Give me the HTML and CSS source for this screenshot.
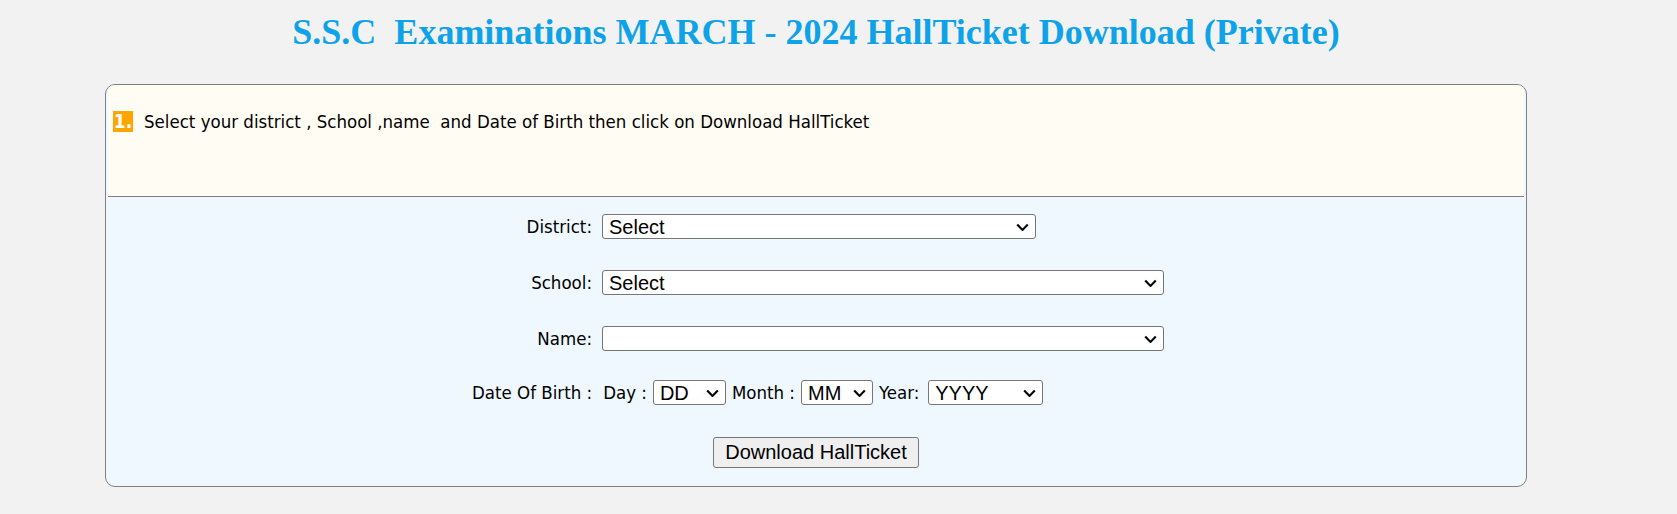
FILE: index.html
```html
<!DOCTYPE html>
<html>
<head>
<meta charset="utf-8">
<title>S.S.C Examinations MARCH - 2024 HallTicket Download (Private)</title>
<link rel="stylesheet" href="styles.css">
</head>
<body>
<div class="page">
  <h1 class="title">S.S.C&nbsp; Examinations MARCH - 2024 HallTicket Download (Private)</h1>
  <div class="panel">
    <div class="instructions">
      <span class="badge">1.</span>
      <span class="instr-text">Select your district , School ,name&nbsp; and Date of Birth then click on Download HallTicket</span>
    </div>
    <div class="form">
      <div class="field-row">
        <label class="label">District:</label>
        <span class="select-wrap w-district">
          <select class="select"><option>Select</option></select>
          <svg class="chev" viewBox="0 0 12 8"><path d="M1 1.5 L6 6.5 L11 1.5" fill="none" stroke="#000" stroke-width="2"/></svg>
        </span>
      </div>
      <div class="field-row">
        <label class="label">School:</label>
        <span class="select-wrap w-wide">
          <select class="select"><option>Select</option></select>
          <svg class="chev" viewBox="0 0 12 8"><path d="M1 1.5 L6 6.5 L11 1.5" fill="none" stroke="#000" stroke-width="2"/></svg>
        </span>
      </div>
      <div class="field-row">
        <label class="label">Name:</label>
        <span class="select-wrap w-wide">
          <select class="select"><option></option></select>
          <svg class="chev" viewBox="0 0 12 8"><path d="M1 1.5 L6 6.5 L11 1.5" fill="none" stroke="#000" stroke-width="2"/></svg>
        </span>
      </div>
      <div class="dob-row">
        <span class="label dob-label">Date Of Birth :</span>
        <span class="label">Day :</span>
        <span class="select-wrap w-dd">
          <select class="select"><option>DD</option></select>
          <svg class="chev" viewBox="0 0 12 8"><path d="M1 1.5 L6 6.5 L11 1.5" fill="none" stroke="#000" stroke-width="2"/></svg>
        </span>
        <span class="label">Month :</span>
        <span class="select-wrap w-mm">
          <select class="select"><option>MM</option></select>
          <svg class="chev" viewBox="0 0 12 8"><path d="M1 1.5 L6 6.5 L11 1.5" fill="none" stroke="#000" stroke-width="2"/></svg>
        </span>
        <span class="label">Year:</span>
        <span class="select-wrap w-yyyy">
          <select class="select"><option>YYYY</option></select>
          <svg class="chev" viewBox="0 0 12 8"><path d="M1 1.5 L6 6.5 L11 1.5" fill="none" stroke="#000" stroke-width="2"/></svg>
        </span>
      </div>
      <div class="button-row">
        <button class="btn" type="button">Download HallTicket</button>
      </div>
    </div>
  </div>
</div>
</body>
</html>
```

FILE: styles.css
```css
html, body {
  margin: 0;
  padding: 0;
  background: #f2f2f2;
}
body {
  font-family: "DejaVu Sans Condensed", "DejaVu Sans", Verdana, sans-serif;
  font-stretch: condensed;
  color: #000;
}
.page {
  width: 1422px;
  margin-left: 105px;
  padding-top: 10px;
}
.title {
  margin: 0;
  height: 74px;
  font-family: "Liberation Serif", "Times New Roman", serif;
  font-stretch: normal;
  font-weight: bold;
  font-size: 36px;
  line-height: 44px;
  color: #0ea3e8;
  text-align: center;
}
.panel {
  box-sizing: border-box;
  height: 403px;
  border: 1px solid #7f7f7f;
  border-radius: 10px;
  background: #eef8fe;
  overflow: hidden;
}
.instructions {
  box-sizing: border-box;
  height: 112px;
  margin: 0 2px;
  padding: 26px 0 0 5px;
  background: #fffcf4;
  border-bottom: 1px solid #7f7f7f;
  display: flex;
  align-items: flex-start;
  font-size: 18.5px;
}
.badge {
  display: inline-block;
  width: 20px;
  height: 21px;
  line-height: 21px;
  background: #ffa500;
  color: #fff;
  font-weight: bold;
  font-size: 19px;
  text-align: center;
  margin-right: 11px;
}
.instr-text {
  line-height: 21px;
}
.form {
  padding-top: 17px;
}
.field-row {
  display: grid;
  grid-template-columns: 486px auto;
  column-gap: 10px;
  align-items: center;
  height: 25px;
  margin-bottom: 31px;
}
.label {
  font-size: 18.5px;
  text-align: right;
  white-space: nowrap;
}
.select-wrap {
  position: relative;
  display: inline-block;
  height: 25px;
}
.select {
  -webkit-appearance: none;
  appearance: none;
  box-sizing: border-box;
  width: 100%;
  height: 25px;
  margin: 0;
  padding: 0 24px 0 6px;
  border: 1px solid #767676;
  border-radius: 3px;
  background: #fff;
  font-family: "Liberation Sans", Arial, sans-serif;
  font-stretch: normal;
  font-size: 20px;
  color: #000;
}
.chev {
  position: absolute;
  right: 7px;
  top: 8.5px;
  width: 13px;
  height: 8.5px;
  pointer-events: none;
}
.w-district { width: 434px; }
.w-wide { width: 562px; }
.w-dd { width: 73px; }
.w-mm { width: 72px; }
.w-yyyy { width: 115px; margin-left: 3px; }
.dob-row {
  display: flex;
  align-items: center;
  gap: 6px;
  height: 25px;
  padding-left: 366px;
  margin-top: -2px;
  margin-bottom: 32px;
}
.dob-label {
  margin-right: 5px;
}
.button-row {
  text-align: center;
}
.btn {
  box-sizing: border-box;
  width: 206px;
  height: 31px;
  padding: 0;
  border: 1px solid #767676;
  border-radius: 3px;
  background: #efefef;
  font-family: "Liberation Sans", Arial, sans-serif;
  font-stretch: normal;
  font-size: 20px;
  color: #000;
}
```
